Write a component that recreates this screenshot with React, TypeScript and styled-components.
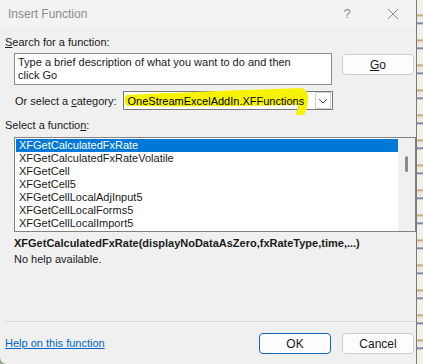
import React, { useState } from "react";
import styled, { createGlobalStyle } from "styled-components";

const functions = [
  "XFGetCalculatedFxRate",
  "XFGetCalculatedFxRateVolatile",
  "XFGetCell",
  "XFGetCell5",
  "XFGetCellLocalAdjInput5",
  "XFGetCellLocalForms5",
  "XFGetCellLocalImport5",
];

const App = () => {
  const [selected, setSelected] = useState(0);

  return (
    <>
      <GlobalStyle />
      <Screen>
        <Dialog>
          <TitleBar>
            <Title>Insert Function</Title>
            <TitleButton>?</TitleButton>
            <TitleButton>
              <svg width="12" height="12" viewBox="0 0 12 12">
                <path d="M1 1 L11 11 M11 1 L1 11" stroke="#8a8a8a" strokeWidth="1" />
              </svg>
            </TitleButton>
          </TitleBar>

          <Body>
            <Label>
              <u>S</u>earch for a function:
            </Label>
            <SearchRow>
              <SearchBox>
                Type a brief description of what you want to do and then click Go
              </SearchBox>
              <Button>
                <u>G</u>o
              </Button>
            </SearchRow>

            <CategoryRow>
              <span>
                Or select a <u>c</u>ategory:
              </span>
              <Select>
                <Marker width="190" height="30" viewBox="0 0 190 30">
                  <path
                    d="M2 8 C40 6 120 3 176 1 C182 1 184 6 184 12 C184 18 182 24 180 28 L172 28 C173 24 174 21 174 18 C130 19 60 20 3 19 C0 17 0 10 2 8 Z"
                    fill="#f7f300"
                  />
                </Marker>
                <SelectText>OneStreamExcelAddIn.XFFunctions</SelectText>
                <DropButton>
                  <svg width="10" height="6" viewBox="0 0 10 6">
                    <path d="M1 1 L5 5 L9 1" stroke="#555" strokeWidth="1" fill="none" />
                  </svg>
                </DropButton>
              </Select>
            </CategoryRow>

            <Label $top={8}>
              Select a functio<u>n</u>:
            </Label>
            <ListBox>
              <Items>
                {functions.map((name, i) => (
                  <Item key={name} $active={i === selected} onClick={() => setSelected(i)}>
                    {name}
                  </Item>
                ))}
              </Items>
              <ScrollTrack>
                <Thumb />
              </ScrollTrack>
            </ListBox>

            <Signature>
              XFGetCalculatedFxRate(displayNoDataAsZero,fxRateType,time,...)
            </Signature>
            <HelpText>No help available.</HelpText>
          </Body>

          <Divider />
          <Footer>
            <HelpLink href="#">Help on this function</HelpLink>
            <Buttons>
              <Button $primary>OK</Button>
              <Button>Cancel</Button>
            </Buttons>
          </Footer>
        </Dialog>
        <Backdrop />
      </Screen>
    </>
  );
};

export default App;

const GlobalStyle = createGlobalStyle`
  html, body {
    margin: 0;
    padding: 0;
    background: #9aa88f;
  }
  body {
    font-family: "Liberation Sans", Arial, sans-serif;
    font-size: 11px;
    color: #1a1a1a;
  }
`;

const Screen = styled.div`
  display: flex;
  width: 423px;
  height: 364px;
  overflow: hidden;
`;

const Dialog = styled.div`
  width: 417px;
  height: 364px;
  background: #f0f0f0;
  border-bottom-left-radius: 7px;
  display: flex;
  flex-direction: column;
  border-right: 1px solid #7a7a7a;
  box-sizing: border-box;
`;

const Backdrop = styled.div`
  flex: 1;
  background: repeating-linear-gradient(
    180deg,
    #f2f0ea 0px,
    #f2f0ea 14px,
    #b89a5c 15px,
    #e9e6dc 17px,
    #f2f0ea 22px,
    #56698e 23px,
    #f2f0ea 25px
  );
`;

const TitleBar = styled.div`
  height: 27px;
  background: #f3f3f3;
  display: flex;
  align-items: center;
  padding-left: 8px;
`;

const Title = styled.div`
  flex: 1;
  color: #8b8b8b;
  font-size: 12px;
`;

const TitleButton = styled.div`
  width: 46px;
  height: 27px;
  display: flex;
  align-items: center;
  justify-content: center;
  color: #8b8b8b;
  font-size: 13px;
`;

const Body = styled.div`
  flex: 1;
  padding: 8px 0 0 5px;
  display: flex;
  flex-direction: column;
`;

const Label = styled.div<{ $top?: number }>`
  line-height: 15px;
  margin-top: ${(p) => p.$top || 0}px;
`;

const SearchRow = styled.div`
  display: flex;
  align-items: flex-start;
  gap: 10px;
  margin: 3px 0 0 9px;
`;

const SearchBox = styled.div`
  width: 318px;
  height: 32px;
  box-sizing: border-box;
  background: #fff;
  border: 1px solid #8c8c8c;
  padding: 2px 20px 0 3px;
  line-height: 13px;
`;

const Button = styled.button<{ $primary?: boolean }>`
  width: 72px;
  height: 21px;
  margin-top: 1px;
  background: #fdfdfd;
  border: ${(p) => (p.$primary ? "1.5px solid #1565c0" : "1px solid #cfcfcf")};
  border-radius: 4px;
  font-family: inherit;
  font-size: 12px;
  color: #1a1a1a;
  padding: 0;
  line-height: 18px;
`;

const CategoryRow = styled.div`
  display: flex;
  align-items: center;
  gap: 6px;
  margin: 6px 0 0 10px;
`;

const Select = styled.div`
  position: relative;
  width: 210px;
  height: 19px;
  box-sizing: border-box;
  background: #fff;
  border: 1px solid #7a7a7a;
  display: flex;
  align-items: center;
`;

const Marker = styled.svg`
  position: absolute;
  left: 0;
  top: -5px;
`;

const SelectText = styled.span`
  position: relative;
  flex: 1;
  padding-left: 4px;
  color: #000;
  white-space: nowrap;
  overflow: hidden;
`;

const DropButton = styled.div`
  width: 16px;
  height: 17px;
  margin-right: 1px;
  box-sizing: border-box;
  border: 1px solid #d0d0d0;
  display: flex;
  align-items: center;
  justify-content: center;
`;

const ListBox = styled.div`
  margin: 4px 0 0 9px;
  width: 402px;
  height: 95px;
  box-sizing: border-box;
  border: 1px solid #828282;
  background: #fff;
  display: flex;
  overflow: hidden;
`;

const Items = styled.div`
  flex: 1;
  padding: 1px 0 0 1px;
`;

const Item = styled.div<{ $active: boolean }>`
  height: 13px;
  line-height: 13px;
  padding-left: 3px;
  background: ${(p) => (p.$active ? "#0078d7" : "transparent")};
  color: ${(p) => (p.$active ? "#fff" : "#1a1a1a")};
  cursor: default;
`;

const ScrollTrack = styled.div`
  width: 17px;
  background: #f0f0f0;
  position: relative;
`;

const Thumb = styled.div`
  position: absolute;
  left: 7px;
  top: 18px;
  width: 3px;
  height: 16px;
  border-radius: 2px;
  background: #8a8a8a;
`;

const Signature = styled.div`
  margin: 4px 0 0 9px;
  font-weight: bold;
  line-height: 15px;
`;

const HelpText = styled.div`
  margin: 1px 0 0 9px;
  line-height: 15px;
`;

const Divider = styled.div`
  height: 1px;
  margin: 0 0 0 5px;
  background: #d9d9d9;
`;

const Footer = styled.div`
  height: 42px;
  display: flex;
  align-items: center;
  padding: 0 2px 0 5px;
`;

const HelpLink = styled.a`
  flex: 1;
  color: #0066cc;
  text-decoration: underline;
`;

const Buttons = styled.div`
  display: flex;
  gap: 11px;
`;
